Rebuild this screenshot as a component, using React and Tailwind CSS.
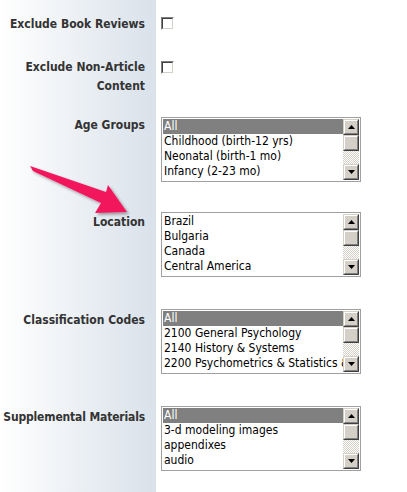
import React from 'react';

const labelFont = { fontFamily: '"DejaVu Sans Condensed", "DejaVu Sans", sans-serif' };

const fields = [
  { label: 'Age Groups', items: ['All', 'Childhood (birth-12 yrs)', 'Neonatal (birth-1 mo)', 'Infancy (2-23 mo)'], selected: 0, mt: 'mt-[21px]', lt: '-mt-[1px]' },
  { label: 'Location', items: ['Brazil', 'Bulgaria', 'Canada', 'Central America'], selected: -1, mt: 'mt-[30px]', lt: 'pt-[1px]' },
  { label: 'Classification Codes', items: ['All', '2100 General Psychology', '2140 History & Systems', '2200 Psychometrics & Statistics & Methodology'], selected: 0, mt: 'mt-[32px]', lt: 'pt-[2px]' },
  { label: 'Supplemental Materials', items: ['All', '3-d modeling images', 'appendixes', 'audio'], selected: 0, mt: 'mt-[32px]', lt: 'pt-[2px] tracking-[-0.15px]' },
];

const Bevel = ({ className = '', children }) => (
  <div className={`border border-t-[#d4d0c8] border-l-[#d4d0c8] border-r-[#404040] border-b-[#404040] ${className}`}>
    <div className="w-full h-full border border-t-white border-l-white border-r-[#808080] border-b-[#808080] bg-[#d4d0c8] flex items-center justify-center">
      {children}
    </div>
  </div>
);

const Checkbox = () => (
  <div className="w-[13px] h-[13px] border border-t-[#808080] border-l-[#808080] border-r-white border-b-white">
    <div className="w-full h-full border border-t-[#404040] border-l-[#404040] border-r-[#d4d0c8] border-b-[#d4d0c8] bg-white" />
  </div>
);

const ListBox = ({ items, selected }) => (
  <div className="w-[200px] h-[65px] border border-[#a0a0a0] bg-white flex p-px">
    <div className="flex-1 min-w-0 overflow-hidden">
      {items.map((item, i) => (
        <div
          key={item}
          className={`h-[15px] leading-[15px] text-[12px] pl-px whitespace-nowrap ${i === selected ? 'bg-[#808080] text-white' : 'text-black'}`}
          style={labelFont}
        >
          {item}
        </div>
      ))}
    </div>
    <div className="w-[16px] flex flex-col">
      <Bevel className="h-[16px]">
        <svg width="7" height="4" viewBox="0 0 7 4"><path d="M3.5 0 L7 4 L0 4 Z" fill="#000" /></svg>
      </Bevel>
      <Bevel className="h-[16px]" />
      <div className="flex-1 bg-[repeating-conic-gradient(#d4d0c8_0_25%,#ffffff_0_50%)] bg-[length:2px_2px]" />
      <Bevel className="h-[16px]">
        <svg width="7" height="4" viewBox="0 0 7 4"><path d="M0 0 L7 0 L3.5 4 Z" fill="#000" /></svg>
      </Bevel>
    </div>
  </div>
);

const Label = ({ children, leading = 'leading-[18px]' }) => (
  <div className={`w-[156px] pr-[11px] text-right font-bold text-[12px] ${leading} text-[#333] whitespace-nowrap`} style={labelFont}>
    {children}
  </div>
);

export default function App() {
  return (
    <div className="relative w-[407px] h-[492px] bg-white bg-[linear-gradient(to_right,#ffffff,#d9e1ea)] bg-[length:156px_100%] bg-no-repeat overflow-hidden">
      <div className="flex flex-col pt-[14px]">
        <div className="flex items-start">
          <div className="pt-[1px]"><Label>Exclude Book Reviews</Label></div>
          <div className="pl-[5px] pt-[3px]"><Checkbox /></div>
        </div>

        <div className="flex items-start mt-[24px]">
          <div className="pt-[1px]"><Label leading="leading-[19px]">Exclude Non-Article<br />Content</Label></div>
          <div className="pl-[5px] pt-[4px]"><Checkbox /></div>
        </div>

        {fields.map((f) => (
          <div key={f.label} className={`flex items-start ${f.mt}`}>
            <div className={f.lt}><Label>{f.label}</Label></div>
            <div className="pl-[5px]"><ListBox items={f.items} selected={f.selected} /></div>
          </div>
        ))}
      </div>

      {/* annotation arrow */}
      <svg className="absolute left-0 top-0 pointer-events-none" width="160" height="230" viewBox="0 0 160 230">
        <defs>
          <filter id="sh" x="-20%" y="-20%" width="140%" height="140%">
            <feDropShadow dx="2" dy="2" stdDeviation="1.5" floodColor="#000" floodOpacity="0.35" />
          </filter>
        </defs>
        <polygon
          points="30,166 106,192 108,185 127,212 95,213 101,203 33,171"
          fill="#f2185c"
          filter="url(#sh)"
        />
      </svg>
    </div>
  );
}
